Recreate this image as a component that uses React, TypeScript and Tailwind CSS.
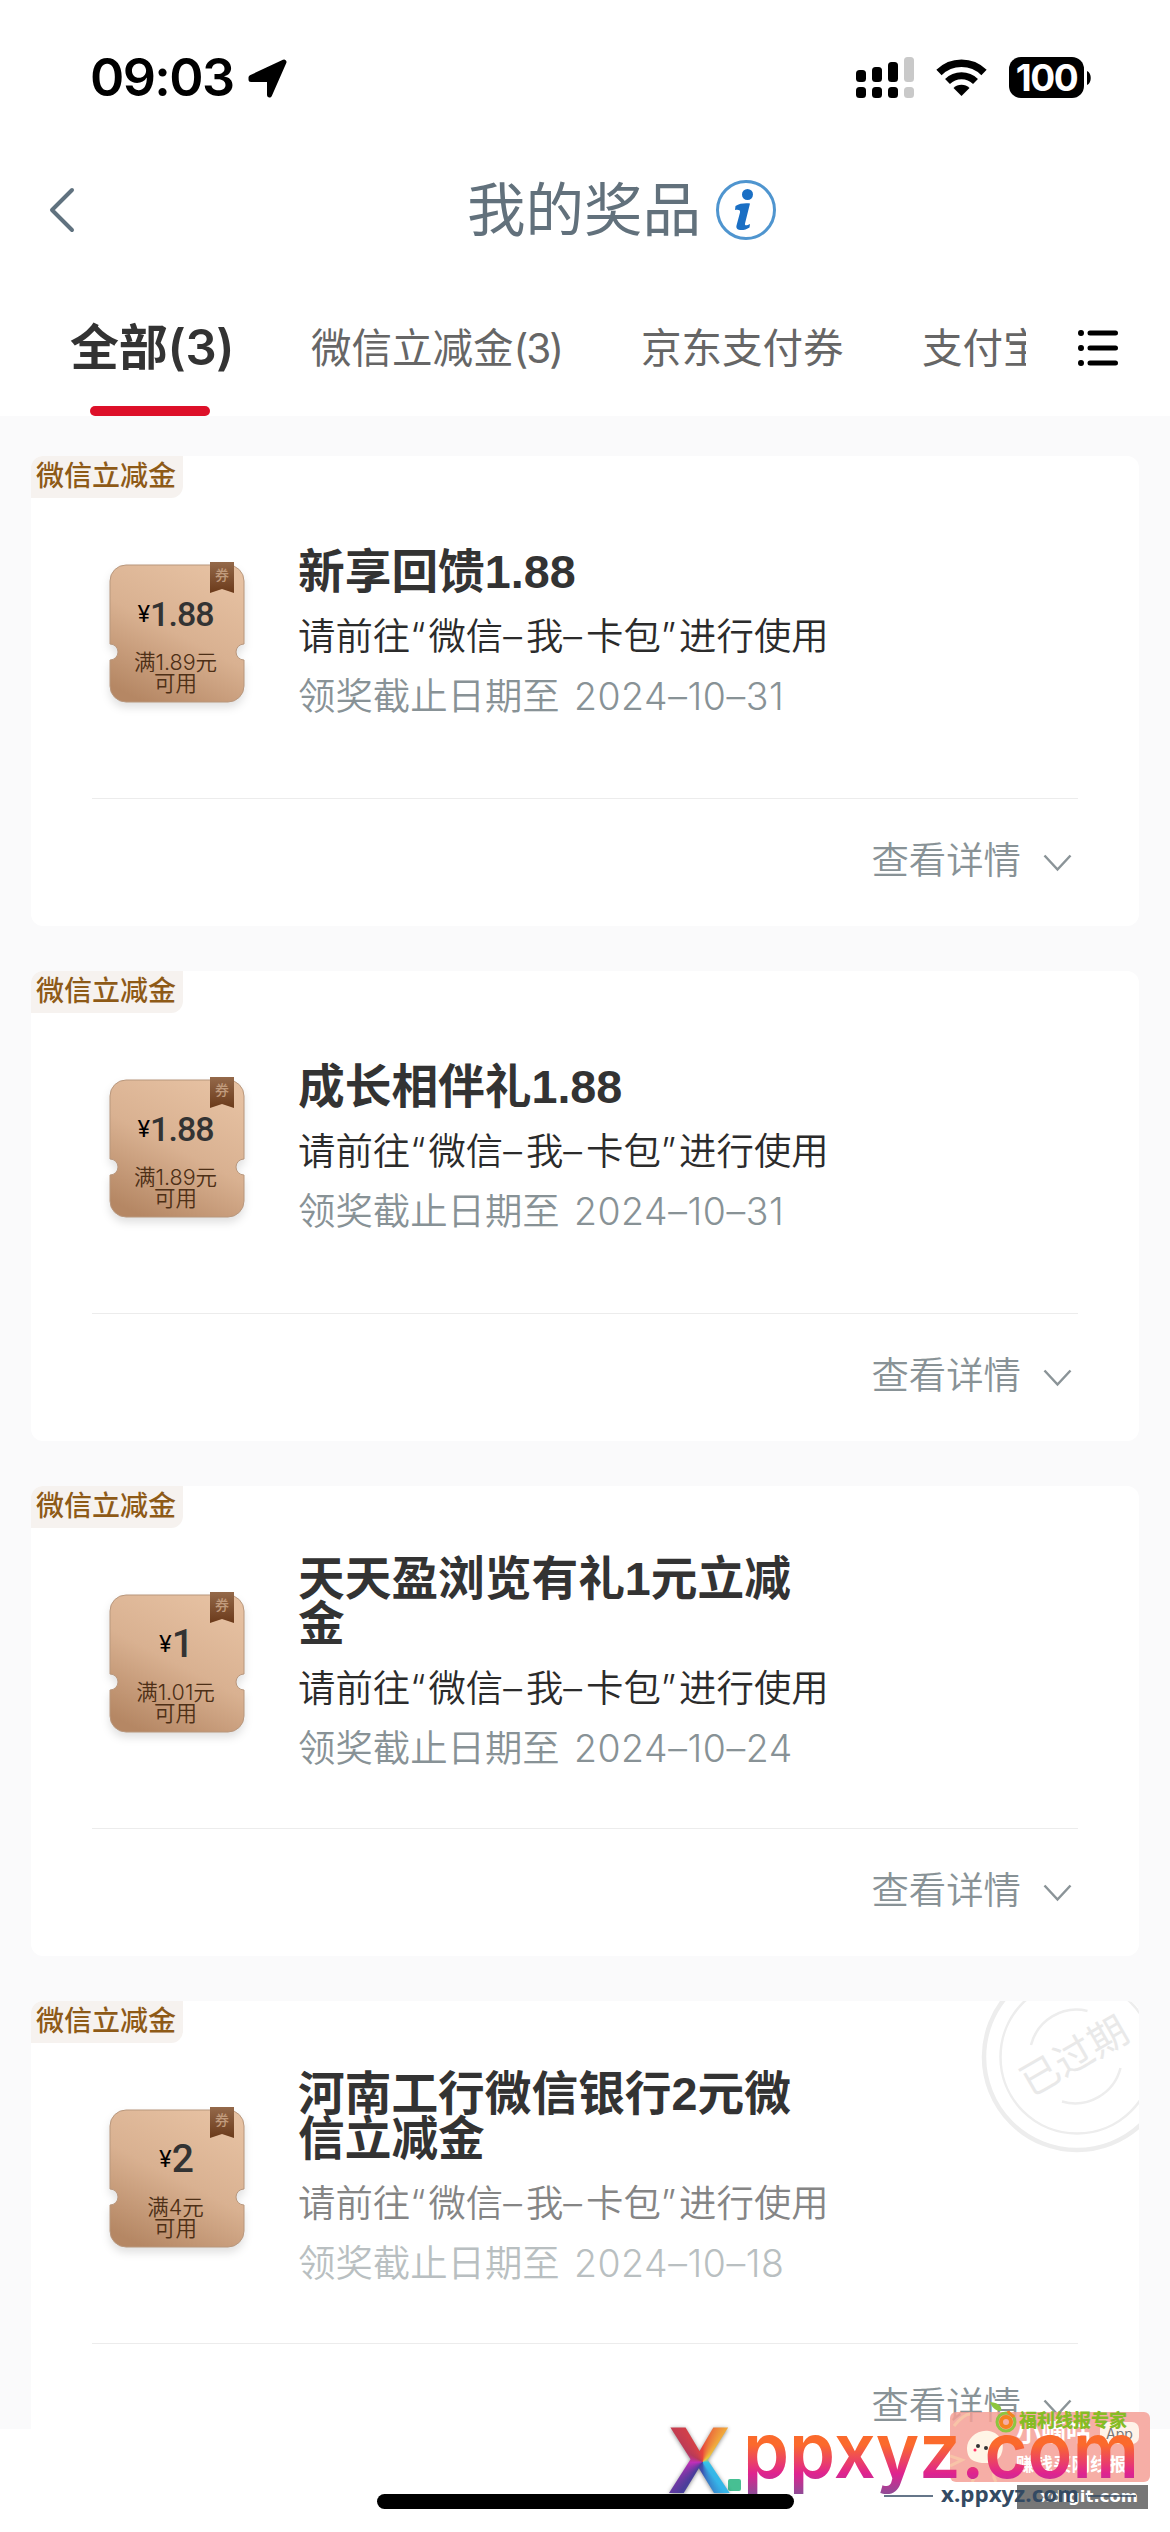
import { ChevronLeft } from 'lucide-react';

interface Prize {
  title: string;
  amount: string;
  limit: string;
  deadline: string;
  expired?: boolean;
}

const prizes: Prize[] = [
  { title: '新享回馈1.88', amount: '1.88', limit: '满1.89元', deadline: '2024–10–31' },
  { title: '成长相伴礼1.88', amount: '1.88', limit: '满1.89元', deadline: '2024–10–31' },
  { title: '天天盈浏览有礼1元立减金', amount: '1', limit: '满1.01元', deadline: '2024–10–24' },
  { title: '河南工行微信银行2元微信立减金', amount: '2', limit: '满4元', deadline: '2024–10–18', expired: true },
];

function StatusBar() {
  return (
    <div className="flex h-[140px] items-start pt-[57px] pl-[90px] pr-[79px]">
      <span className="font-['Inter'] text-[52px] leading-[42px] font-semibold tracking-[-1.6px] text-black">09:03</span>
      <svg className="mt-[2px] ml-[14px] h-[40px] w-[40px]" viewBox="0 0 40 40">
        <path d="M3 18.5 36 3 21.5 36V20.5H3z" fill="#000" stroke="#000" strokeWidth="5" strokeLinejoin="round" />
      </svg>
      <div className="ml-auto flex items-start">
        <svg className="h-[41px] w-[58px]" viewBox="0 0 58 41">
          <g fill="#000">
            <rect x="0" y="13" width="10" height="12" rx="3.5" />
            <rect x="16" y="10" width="10" height="15" rx="3.5" />
            <rect x="32" y="5" width="10" height="20" rx="3.5" />
            <rect x="0" y="30" width="10" height="11" rx="3.5" />
            <rect x="16" y="30" width="10" height="11" rx="3.5" />
            <rect x="32" y="30" width="10" height="11" rx="3.5" />
          </g>
          <g fill="#c9c9c9">
            <rect x="48" y="0" width="10" height="25" rx="3.5" />
            <rect x="48" y="30" width="10" height="11" rx="3.5" />
          </g>
        </svg>
        <svg className="mt-[2px] ml-[22px] h-[37px] w-[51px]" viewBox="0 0 51 37">
          <path d="M3 13.5a32 32 0 0 1 45 0" fill="none" stroke="#000" strokeWidth="7.5" />
          <path d="M11.5 22.5a20 20 0 0 1 28 0" fill="none" stroke="#000" strokeWidth="7" />
          <path d="M17.5 29a11.5 11.5 0 0 1 16 0l-8 8z" fill="#000" />
        </svg>
        <div className="ml-[22px] flex h-[41px] w-[75px] items-center justify-center rounded-[12px] bg-black font-['Inter'] text-[37px] font-bold tracking-[-1.5px] text-white">
          100
        </div>
        <svg className="mt-[14px] ml-[3px] h-[14px] w-[4px]" viewBox="0 0 4 14">
          <path d="M0 0c5 2 5 12 0 14z" fill="#000" />
        </svg>
      </div>
    </div>
  );
}

function NavBar() {
  return (
    <div className="flex h-[140px] items-center">
      <div className="flex w-[467px] pl-[22px]">
        <ChevronLeft className="h-[80px] w-[80px] text-[#60727f]" strokeWidth={1.2} />
      </div>
      <h1 className="text-[58.5px] leading-[60px] font-normal text-[#62717c]">我的奖品</h1>
      <svg className="ml-[14px] h-[62px] w-[62px]" viewBox="0 0 62 62">
        <circle cx="31" cy="31" r="28.5" fill="none" stroke="#4f95cf" strokeWidth="3" />
        <circle cx="32.5" cy="15.5" r="5.5" fill="#1a6fc4" />
        <path
          d="M20.5 27c4-2.500 9-3 14.500-2.500l-5 20c-.6 2.500 2 2 5 .5l-.5 3.500c-5 3.500-14.500 4-13-2l3.500-13c.5-2.500-1.500-3-5-2.500z"
          fill="#1a6fc4"
        />
      </svg>
    </div>
  );
}

function Tabs() {
  return (
    <div className="flex h-[136px]">
      <div className="flex w-[1026px] overflow-hidden pl-[70px] text-[40.5px] whitespace-nowrap text-[#666]">
        <div className="flex w-[241px] shrink-0 flex-col justify-between">
          <span className="pt-[38px] text-[49px] leading-[60px] font-bold tracking-[-0.3px] text-[#333]">
            全部<span className="font-['Inter'] font-semibold">(3)</span>
          </span>
          <span className="ml-[20px] h-[10px] w-[120px] rounded-full bg-[#dd1029]" />
        </div>
        <span className="w-[330px] shrink-0 pt-[39px] leading-[60px]">
          微信立减金<span className="tracking-[-2px]">(3)</span>
        </span>
        <span className="w-[281px] shrink-0 pt-[39px] leading-[60px]">京东支付券</span>
        <span className="shrink-0 pt-[39px] leading-[60px]">支付宝</span>
      </div>
      <svg className="mt-[49px] ml-[52px] h-[38px] w-[40px]" viewBox="0 0 40 38">
        <g stroke="#000" strokeWidth="5" strokeLinecap="round">
          <path d="M12 4h25.5M12 19h25.5M12 34h25.5" />
          <path d="M2.9 4h.2M2.9 19h.2M2.9 34h.2" strokeWidth="5.8" />
        </g>
      </svg>
    </div>
  );
}

function Voucher({ amount, limit }: { amount: string; limit: string }) {
  return (
    <div className="relative h-[137px] w-[134px] shrink-0">
      <svg className="absolute -top-[6px] -left-[10px] h-[160px] w-[154px]" viewBox="-10 -6 154 160">
        <defs>
          <linearGradient id="gold" x1="0.75" y1="0" x2="0.25" y2="1">
            <stop offset="0" stopColor="#e6c1a2" />
            <stop offset="0.5" stopColor="#d9b191" />
            <stop offset="1" stopColor="#b58764" />
          </linearGradient>
          <linearGradient id="ribbon" x1="0" y1="0" x2="0" y2="1">
            <stop offset="0" stopColor="#94694a" />
            <stop offset="1" stopColor="#6b3a1a" />
          </linearGradient>
        </defs>
        <path
          d="M16 0h102a16 16 0 0 1 16 16v63a8 8 0 0 0 0 16v26a16 16 0 0 1-16 16H16a16 16 0 0 1-16-16V95a8 8 0 0 0 0-16V16A16 16 0 0 1 16 0z"
          fill="url(#gold)"
          stroke="#b8977d"
          strokeWidth="1"
          className="drop-shadow-[0_5px_4px_rgba(0,0,0,0.12)]"
        />
        <path d="M100-3h24v31l-12-4-12 4z" fill="url(#ribbon)" />
      </svg>
      <span className="absolute top-[1px] left-[105px] text-[14px] leading-[18px] font-medium text-[#c09a7c]">券</span>
      <div className="relative flex flex-col items-center pt-[31px] pr-[3px] text-[#4d2f16]">
        <div className="flex h-[36px] items-center leading-[36px] text-[#333]">
          <span className="font-['Inter'] text-[23px] text-black">¥</span>
          <span
            className={
              amount.length > 1
                ? "font-['Roboto'] text-[34px] font-medium tracking-[-1px]"
                : "font-['Roboto'] text-[39px] font-medium tracking-[-2px]"
            }
          >
            {amount}
          </span>
        </div>
        <span className="mt-[20px] text-[21.5px] leading-[21px] font-[350] whitespace-nowrap">{limit}</span>
        <span className="text-[21.5px] leading-[21px] font-[350]">可用</span>
      </div>
    </div>
  );
}

function ExpiredStamp() {
  return (
    <svg className="absolute top-0 right-0 h-[152px] w-[159px]" viewBox="-97 -56 159 152">
      <g fill="none" stroke="#ededed">
        <circle r="93" strokeWidth="4.5" />
        <circle r="76.5" strokeWidth="2.5" />
        <path d="M-46-12A47 47 0 0 1 10.5-46M-15 44.5A47 47 0 0 0 43.5 11" strokeWidth="2.5" />
      </g>
      <text transform="translate(-3 -1) rotate(-30)" y="14" textAnchor="middle" fontSize="39" fill="#e9e9e9">
        已过期
      </text>
    </svg>
  );
}

function PrizeCard({ prize }: { prize: Prize }) {
  return (
    <div className="relative h-[470px] shrink-0 overflow-hidden rounded-[12px] bg-white">
      <span className="absolute top-0 left-0 h-[42px] w-[152px] rounded-br-[12px] bg-[#f6f2ef] pl-[5px] text-[28px] leading-[41px] font-medium text-[#8e5a17]">
        微信立减金
      </span>
      {prize.expired && <ExpiredStamp />}
      <div className="mx-[61px] flex h-[343px] items-center border-b border-[#ececec] pt-[22px] pl-[18px]">
        <div className="-mt-[9px]">
          <Voucher amount={prize.amount} limit={prize.limit} />
        </div>
        <div className="ml-[54px] w-[510px]">
          <h2 className="font-['Liberation_Sans','Noto_Sans_CJK_SC',sans-serif] text-[46.7px] leading-[45px] font-bold text-[#333]">
            {prize.title}
          </h2>
          <p
            className={`mt-[12px] text-[37.4px] leading-[60px] font-[350] whitespace-nowrap ${prize.expired ? 'text-[#858585]' : 'text-[#2b2b2b]'}`}
          >
            请前往<span className="tracking-[3px]">“</span>微信<span className="tracking-[4px]">–</span>我
            <span className="tracking-[4px]">–</span>卡包<span className="tracking-[3px]">”</span>进行使用
          </p>
          <p
            className={`text-[37.4px] leading-[60px] font-[350] whitespace-nowrap ${prize.expired ? 'text-[#b9bfc1]' : 'text-[#889296]'}`}
          >
            领奖截止日期至<span className="ml-[3px] tracking-[0.6px]"> {prize.deadline}</span>
          </p>
        </div>
      </div>
      <div className="flex h-[124px] items-center justify-end pr-[67px]">
        <span className="text-[37.4px] font-[350] text-[#889296]">查看详情</span>
        <svg className="mt-[4px] ml-[22px] h-[18px] w-[29px]" viewBox="0 0 29 18">
          <path d="m1.5 1.5 13 14 13-14" fill="none" stroke="#8b9498" strokeWidth="2.5" />
        </svg>
      </div>
    </div>
  );
}

function Watermark() {
  return (
    <>
      <div className="absolute top-[2412px] left-[950px] h-[70px] w-[200px] overflow-hidden rounded-[6px] bg-[#f5a097]/85">
        <svg className="absolute top-0 left-0 h-[70px] w-[60px]" viewBox="0 0 60 70">
          <g fill="none" stroke="#f8c4a8" strokeWidth="3">
            <path d="M4 14q10-12 16-12M0 44l12 4-12 6M44 54q-2 10 2 16M28 60l-6 10" />
          </g>
          <path d="M17 36c0-9 10-19 22-17s17 14 12 24-20 9-27 6c-5-2-7-7-7-13z" fill="#fff5e6" />
          <circle cx="28" cy="34" r="2" fill="#333" />
          <circle cx="36" cy="36" r="2" fill="#333" />
          <circle cx="25" cy="38" r="1.5" fill="#f36" />
        </svg>
        <span className="absolute top-[7px] left-[66px] text-[25px] leading-[26px] font-bold text-white">小嘀咕</span>
        <span className="absolute top-[10px] left-[150px] h-[22px] w-[39px] rounded-[7px] bg-[#fff3e8] pl-[6px] text-[14px] leading-[23px] text-[#777]">
          App
        </span>
        <span className="absolute top-[41px] left-[66px] text-[18.5px] leading-[22px] font-bold text-white">赚钱买刚线报</span>
      </div>
      <svg className="absolute top-[2402px] left-[990px] h-[32px] w-[28px]" viewBox="0 0 28 32">
        <path d="M0 0c10 1 12 5 11 9C6 9 2 6 0 0z" fill="#8dc63f" />
        <circle cx="16" cy="20" r="9" fill="none" stroke="#8dc63f" strokeWidth="3" />
        <circle cx="16" cy="20" r="5" fill="none" stroke="#f58220" strokeWidth="4" />
        <path d="M18 9c1 3 4 4 6 6" stroke="#f58220" strokeWidth="3" fill="none" />
      </svg>
      <span className="absolute top-[2410px] left-[1019px] text-[18px] leading-[22px] font-black text-[#86bc25]">福利线报专家</span>
      <span className="absolute top-[2485px] left-[1017px] h-[24px] w-[131px] bg-[#777] pr-[10px] text-right font-['DejaVu_Sans'] text-[16.5px] leading-[23px] font-bold text-white">
        xdigit.com
      </span>
      <svg className="absolute top-[2410px] left-[660px] h-[110px] w-[500px]" viewBox="0 0 500 110">
        <defs>
          <linearGradient id="sunset" gradientUnits="userSpaceOnUse" x1="0" y1="26" x2="0" y2="84">
            <stop offset="0.15" stopColor="#fb6a2c" />
            <stop offset="0.65" stopColor="#df2390" />
            <stop offset="1" stopColor="#8f4c96" />
          </linearGradient>
        </defs>
        <text
          x="83"
          y="68"
          textLength="396"
          lengthAdjust="spacingAndGlyphs"
          className="font-['Inter'] text-[77px] font-semibold"
          fill="url(#sunset)"
        >
          ppxyz.com
        </text>
        <rect x="68" y="69" width="13" height="12" rx="2" fill="#47bf93" />
        <path d="M224 86h49M428 86h48" stroke="#334a63" strokeWidth="1.5" />
        <text
          x="281"
          y="92"
          textLength="138"
          lengthAdjust="spacingAndGlyphs"
          className="font-['Open_Sans'] text-[21px] font-bold"
          fill="#334a63"
        >
          x.ppxyz.com
        </text>
      </svg>
      <span className="absolute top-[2409px] left-[669px] bg-[conic-gradient(from_0deg_at_55%_54%,#e8453c,#f0a83c_10%,#e8c840_14%,#35c8e8_26%,#35b4e8_40%,#3a55b0_50%,#4a3d9a_60%,#c02fb8_74%,#b83a58_84%,#e8453c)] bg-clip-text font-['Open_Sans'] text-[91px] leading-[98px] font-bold text-transparent drop-shadow-[0_1px_2px_rgba(0,0,0,0.45)]">
        X
      </span>
    </>
  );
}

export default function App() {
  return (
    <div className="relative flex h-[2532px] w-[1170px] flex-col overflow-hidden bg-white font-['Inter','Noto_Sans_CJK_SC',sans-serif]">
      <header className="h-[416px] shrink-0">
        <StatusBar />
        <NavBar />
        <Tabs />
      </header>
      <main className="flex h-[2013px] shrink-0 flex-col gap-[45px] overflow-hidden bg-[#fafafb] pt-[40px] pr-[31px] pl-[31px]">
        {prizes.map((prize) => (
          <PrizeCard key={prize.title} prize={prize} />
        ))}
      </main>
      <div className="mx-auto mt-[65px] h-[15px] w-[417px] shrink-0 rounded-full bg-black" />
      <Watermark />
    </div>
  );
}
